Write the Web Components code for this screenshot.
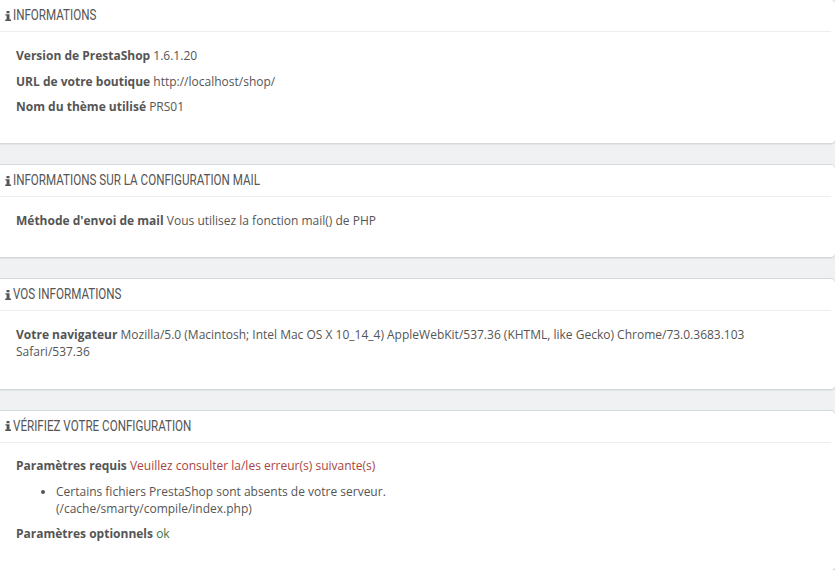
<!DOCTYPE html>
<html>
<head>
<meta charset="utf-8">
<title>Informations</title>
<style>
  html, body { margin: 0; height: 100%; overflow: hidden; background: #eff1f2; }
  body {
    font-family: "Open Sans", "Liberation Sans", sans-serif;
    font-size: 12px;
    line-height: 17px;
    color: #555;
  }
  #page { margin: -1px -1px 0 -5px; }
  .err { color: #a94442; }
  .good { color: #3c763d; }
</style>
</head>
<body>
<div id="page">
  <info-panel heading="Informations">
    <info-row label="Version de PrestaShop">1.6.1.20</info-row>
    <info-row label="URL de votre boutique">http://localhost/shop/</info-row>
    <info-row label="Nom du thème utilisé">PRS01</info-row>
  </info-panel>
  <info-panel heading="Informations sur la configuration mail">
    <info-row label="Méthode d'envoi de mail">Vous utilisez la fonction mail() de PHP</info-row>
  </info-panel>
  <info-panel heading="Vos informations" style="--panel-pad: 20px">
    <info-row label="Votre navigateur">Mozilla/5.0 (Macintosh; Intel Mac OS X 10_14_4) AppleWebKit/537.36 (KHTML, like Gecko) Chrome/73.0.3683.103 Safari/537.36</info-row>
  </info-panel>
  <info-panel heading="Vérifiez votre configuration" style="--head-gap: 14.5px">
    <info-row label="Paramètres requis"><span class="err">Veuillez consulter la/les erreur(s) suivante(s)</span></info-row>
    <info-list>
      <li>Certains fichiers PrestaShop sont absents de votre serveur.<br>(/cache/smarty/compile/index.php)</li>
    </info-list>
    <info-row label="Paramètres optionnels"><span class="good">ok</span></info-row>
  </info-panel>
</div>

<script>
class InfoPanel extends HTMLElement {
  constructor() {
    super();
    const shadowRoot = this.attachShadow({mode: 'open'});
    shadowRoot.innerHTML = `
      <style>
        :host {
          display: block;
          position: relative;
          margin-bottom: 20px;
          padding: 20px 20px var(--panel-pad, 19.5px);
          background: #fff;
          border: 1px solid #d3d8db;
          border-radius: 5px;
          box-shadow: rgba(0,0,0,.05) 0 1px 0;
        }
        header {
          display: flex;
          align-items: center;
          gap: 2px;
          height: 31px;
          margin: -20px -16px var(--head-gap, 15px) -16px;
          padding-left: 5px;
          border-bottom: 1px solid #eee;
          font-family: "Roboto", sans-serif;
          font-size: 14px;
          text-transform: uppercase;
          color: #555;
        }
        svg { width: 6px; height: 10px; fill: #555; flex: none; }
        /* no condensed face installed, so squeeze the title */
        #title { display: inline-block; transform: scaleX(.83); transform-origin: left center; white-space: nowrap; }
      </style>
      <header>
        <svg viewBox="0 0 6 10"><path d="M1.5 0h3v2.2h-3zM.4 3.2h4.1v5.4H6V10H.2V8.6h1.4V4.6H.4z"/></svg>
        <span id="title"></span>
      </header>
      <slot></slot>
    `;
    shadowRoot.querySelector('#title').textContent = this.getAttribute('heading');
  }
}

class InfoRow extends HTMLElement {
  constructor() {
    super();
    const shadowRoot = this.attachShadow({mode: 'open'});
    shadowRoot.innerHTML = `
      <style>
        :host { display: block; margin-bottom: 8.5px; }
        strong { font-weight: 700; }
      </style>
      <strong></strong> <slot></slot>
    `;
    shadowRoot.querySelector('strong').textContent = this.getAttribute('label');
  }
}

class InfoList extends HTMLElement {
  constructor() {
    super();
    const shadowRoot = this.attachShadow({mode: 'open'});
    shadowRoot.innerHTML = `
      <style>
        :host { display: block; margin-bottom: 8.5px; padding-left: 40px; }
        ::slotted(li) { display: list-item; list-style: disc; }
      </style>
      <slot></slot>
    `;
  }
}

customElements.define('info-panel', InfoPanel);
customElements.define('info-row', InfoRow);
customElements.define('info-list', InfoList);
</script>
</body>
</html>
